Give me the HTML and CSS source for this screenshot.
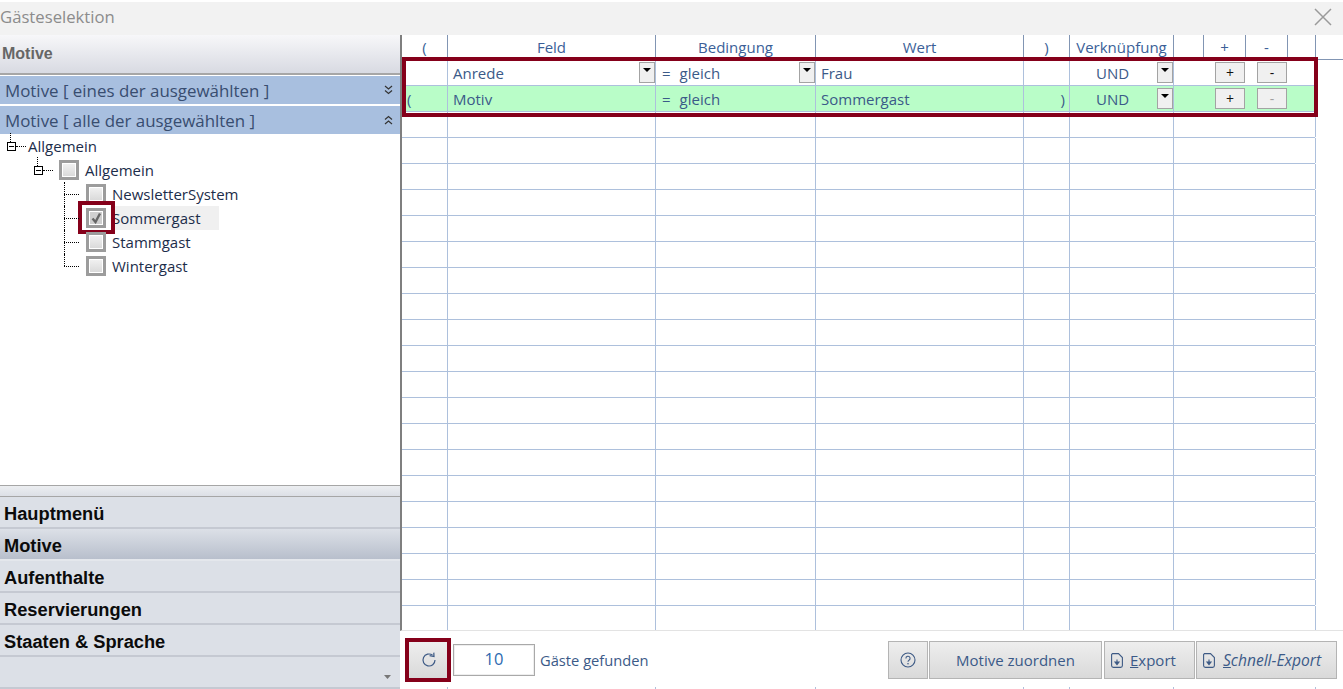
FILE: index.html
```html
<!DOCTYPE html>
<html lang="de">
<head>
<meta charset="utf-8">
<title>Gästeselektion</title>
<link rel="stylesheet" href="styles.css">
</head>
<body>
<div class="app">
  <header class="titlebar">
    <span class="title">Gästeselektion</span>
    <svg class="close" width="18" height="18" viewBox="0 0 18 18"><path d="M1 1L17 17M17 1L1 17" stroke="#9a9a9a" stroke-width="1.5" fill="none"/></svg>
  </header>
  <div class="main">
    <aside class="side">
      <div class="side-head">Motive</div>
      <div class="band band-first"><span>Motive [ eines der ausgewählten ]</span>
        <svg width="9" height="10" viewBox="0 0 9 10"><path d="M1 1L4.5 4L8 1M1 5.5L4.5 8.5L8 5.5" stroke="#333" stroke-width="1.2" fill="none"/></svg>
      </div>
      <div class="band"><span>Motive [ alle der ausgewählten ]</span>
        <svg width="9" height="10" viewBox="0 0 9 10"><path d="M1 4.5L4.5 1.5L8 4.5M1 9L4.5 6L8 9" stroke="#333" stroke-width="1.2" fill="none"/></svg>
      </div>
      <div class="tree">
        <div class="node lvl0"><span class="exp"></span><span class="label">Allgemein</span></div>
        <div class="node lvl1"><span class="exp"></span><span class="cb"></span><span class="label">Allgemein</span></div>
        <div class="node child"><span class="cb"></span><span class="label">NewsletterSystem</span></div>
        <div class="node child sel"><span class="cb cb-on"><svg width="12" height="12" viewBox="0 0 12 12"><path d="M2.5 6.5L5.5 10L10 1.5" stroke="#666" stroke-width="2.4" fill="none"/></svg></span><span class="label">Sommergast</span><span class="mark"></span></div>
        <div class="node child"><span class="cb"></span><span class="label">Stammgast</span></div>
        <div class="node child last"><span class="cb"></span><span class="label">Wintergast</span></div>
      </div>
      <div class="grip"></div>
      <nav class="menu">
        <div class="mi">Hauptmenü</div>
        <div class="mi mi-on">Motive</div>
        <div class="mi">Aufenthalte</div>
        <div class="mi">Reservierungen</div>
        <div class="mi">Staaten &amp; Sprache</div>
        <div class="mi mi-end"><svg width="7" height="4" viewBox="0 0 7 4"><path d="M0 0H7L3.5 4Z" fill="#777"/></svg></div>
      </nav>
    </aside>
    <section class="content">
      <div class="grid">
        <div class="ghead">
          <div>(</div><div>Feld</div><div>Bedingung</div><div>Wert</div><div>)</div><div>Verknüpfung</div><div></div><div>+</div><div>-</div><div></div><div class="open"></div>
        </div>
        <div class="row">
          <div class="c"></div>
          <div class="c"><span class="t1">Anrede</span><span class="dd"></span></div>
          <div class="c"><span class="eq">=</span><span>gleich</span><span class="dd"></span></div>
          <div class="c"><span class="t2">Frau</span></div>
          <div class="c"></div>
          <div class="c c-und"><span class="und">UND</span><span class="dd"></span></div>
          <div class="c c-btn"><span class="pm">+</span><span class="pm">-</span></div>
        </div>
        <div class="row row-g">
          <div class="c"><span class="po">(</span></div>
          <div class="c"><span class="t1">Motiv</span></div>
          <div class="c"><span class="eq">=</span><span>gleich</span></div>
          <div class="c"><span class="t2">Sommergast</span></div>
          <div class="c c-end"><span>)</span></div>
          <div class="c c-und"><span class="und">UND</span><span class="dd"></span></div>
          <div class="c c-btn"><span class="pm">+</span><span class="pm pm-off">-</span></div>
        </div>
        <div class="row"><i></i><i></i><i></i><i></i><i></i><i></i><i></i></div>
        <div class="row"><i></i><i></i><i></i><i></i><i></i><i></i><i></i></div>
        <div class="row"><i></i><i></i><i></i><i></i><i></i><i></i><i></i></div>
        <div class="row"><i></i><i></i><i></i><i></i><i></i><i></i><i></i></div>
        <div class="row"><i></i><i></i><i></i><i></i><i></i><i></i><i></i></div>
        <div class="row"><i></i><i></i><i></i><i></i><i></i><i></i><i></i></div>
        <div class="row"><i></i><i></i><i></i><i></i><i></i><i></i><i></i></div>
        <div class="row"><i></i><i></i><i></i><i></i><i></i><i></i><i></i></div>
        <div class="row"><i></i><i></i><i></i><i></i><i></i><i></i><i></i></div>
        <div class="row"><i></i><i></i><i></i><i></i><i></i><i></i><i></i></div>
        <div class="row"><i></i><i></i><i></i><i></i><i></i><i></i><i></i></div>
        <div class="row"><i></i><i></i><i></i><i></i><i></i><i></i><i></i></div>
        <div class="row"><i></i><i></i><i></i><i></i><i></i><i></i><i></i></div>
        <div class="row"><i></i><i></i><i></i><i></i><i></i><i></i><i></i></div>
        <div class="row"><i></i><i></i><i></i><i></i><i></i><i></i><i></i></div>
        <div class="row"><i></i><i></i><i></i><i></i><i></i><i></i><i></i></div>
        <div class="row"><i></i><i></i><i></i><i></i><i></i><i></i><i></i></div>
        <div class="row"><i></i><i></i><i></i><i></i><i></i><i></i><i></i></div>
        <div class="row"><i></i><i></i><i></i><i></i><i></i><i></i><i></i></div>
        <div class="row"><i></i><i></i><i></i><i></i><i></i><i></i><i></i></div>
        <div class="outline"></div>
      </div>
      <footer class="foot">
        <button class="btn refresh" type="button" aria-label="Aktualisieren">
          <svg width="16" height="16" viewBox="0 0 16 16"><path d="M11.6 3.2A6 6 0 1 0 14 8" stroke="#3d5a85" stroke-width="1.2" fill="none"/><path d="M8.6 3.6L13 4.6L12.8 0.6" stroke="#3d5a85" stroke-width="1.2" fill="none"/></svg>
        </button>
        <span class="count">10</span>
        <span class="found">Gäste gefunden</span>
        <button class="btn b-help" type="button" aria-label="Hilfe">
          <svg width="16" height="16" viewBox="0 0 16 16"><circle cx="8" cy="8" r="7" stroke="#3d5a85" stroke-width="1.1" fill="none"/><path d="M5.9 6.4A2.1 2.1 0 1 1 9 8.2C8.3 8.6 8 9 8 9.8" stroke="#3d5a85" stroke-width="1.1" fill="none"/><circle cx="8" cy="11.8" r="0.8" fill="#3d5a85"/></svg>
        </button>
        <button class="btn b-mot" type="button">Motive zuordnen</button>
        <button class="btn b-exp" type="button">
          <svg width="12" height="15" viewBox="0 0 12 15"><path d="M1.5 .6H7.5L11.4 4.5V12.6A1.8 1.8 0 0 1 9.6 14.4H2.4A1.8 1.8 0 0 1 .6 12.6V1.5Z" stroke="#3d5a85" stroke-width="1.1" fill="none"/><path d="M6 6.5V10.5M4 9H8L6 11.5Z" stroke="#3d5a85" stroke-width="1.1" fill="#3d5a85"/></svg>
          <span><u>E</u>xport</span>
        </button>
        <button class="btn b-qexp" type="button">
          <svg width="12" height="15" viewBox="0 0 12 15"><path d="M1.5 .6H7.5L11.4 4.5V12.6A1.8 1.8 0 0 1 9.6 14.4H2.4A1.8 1.8 0 0 1 .6 12.6V1.5Z" stroke="#3d5a85" stroke-width="1.1" fill="none"/><path d="M6 6.5V10.5M4 9H8L6 11.5Z" stroke="#3d5a85" stroke-width="1.1" fill="#3d5a85"/></svg>
          <em><u>S</u>chnell-Export</em>
        </button>
      </footer>
      <div class="row ticks"><i></i><i></i><i></i><i></i><i></i><i></i><i></i></div>
    </section>
  </div>
</div>
</body>
</html>
```
FILE: styles.css
```css
* { box-sizing: border-box; }
html, body { margin: 0; height: 100%; background: #fff; overflow: hidden; }
body { font-family: "Open Sans", "Liberation Sans", sans-serif; font-size: 15px; color: #3b5a88; }
.app { width: 1343px; height: 689px; padding-top: 2px; display: flex; flex-direction: column; }

.titlebar { height: 33px; flex: none; background: #f2f2f2; display: flex; align-items: center; justify-content: space-between; padding: 0 11px 4px 0; }
.title { font-size: 16.7px; color: #8c8c8c; }

.main { flex: 1; display: flex; min-height: 0; }

.side { width: 400px; flex: none; display: flex; flex-direction: column; height: 654px; }
.side-head { height: 38px; flex: none; padding: 0 2px; display: flex; align-items: center; font: bold 16px "Liberation Sans", sans-serif; color: #666; background: linear-gradient(#f7f7f9, #d8dae2); }
.band { height: 28px; flex: none; margin-top: 2px; background: #a8bfdf; display: flex; align-items: center; justify-content: space-between; padding: 0 7px 0 5px; font-size: 16.9px; color: #384d70; }
.band-first { margin-top: 3px; position: relative; }
.band-first::before { content: ""; position: absolute; left: 0; right: 0; top: -3px; height: 2px; background: #a6a6a6; }

.tree { height: 351px; flex: none; position: relative; color: #1c2d4a; }
.node { height: 24px; display: flex; align-items: center; position: relative; }
.label { position: relative; }
.lvl0 { padding-left: 7px; }
.lvl0 .label { margin-left: 12px; }
.lvl1 { padding-left: 34px; }
.lvl1 .cb { margin-left: 16px; }
.lvl1 .label { margin-left: 6px; }
.exp { width: 9px; height: 9px; flex: none; border: 1px solid #000; position: relative; background: linear-gradient(#000, #000) center / 5px 1px no-repeat #fff; }
.exp::before { content: ""; position: absolute; left: 2px; top: -10px; height: 9px; border-left: 1px dotted #000; }
.exp::after { content: ""; position: absolute; left: 8px; top: 3px; width: 10px; border-top: 1px dotted #000; }
.cb { width: 20px; height: 20px; flex: none; border: 3px solid #9c9c9c; background: linear-gradient(#f2f2f2, #d8d8d8); box-shadow: inset 0 0 0 1px #fff; display: flex; align-items: center; justify-content: center; }
.cb-on { background: #cfcfcf; }
.child { padding-left: 86px; }
.child .label { margin-left: 6px; padding-right: 18px; }
.child::before { content: ""; position: absolute; left: 64px; top: 0; height: 24px; border-left: 1px dotted #000; }
.child::after { content: ""; position: absolute; left: 64px; top: 12px; width: 15px; border-top: 1px dotted #000; }
.child.last::before { height: 12px; }
.sel .label { background: #f0f0f0; align-self: stretch; display: flex; align-items: center; }
.mark { position: absolute; left: 78px; top: -5px; width: 37px; height: 33px; border: 4px solid #85001a; }

.grip { height: 12px; flex: none; border-top: 1px solid #a6a6a6; border-bottom: 1px solid #a6a6a6; background: linear-gradient(#eceef1, #dcdfe6); }
.menu { flex: 1; display: flex; flex-direction: column; border-bottom: 2px solid #c5c9d2; }
.mi { height: 32px; flex: none; padding: 3px 0 0 4px; display: flex; align-items: center; font: bold 18.25px "Liberation Sans", sans-serif; color: #0b0b0b; background: #dce0e7; border-bottom: 2px solid #c5c9d2; }
.mi-on { background: linear-gradient(#dce0e7, #b8bfcc); border-bottom-color: #e4e7ec; }
.mi-end { flex: 1; height: auto; border-bottom: 0; justify-content: flex-end; padding: 10px 9px 0 0; }

.content { flex: 1; min-width: 0; height: 654px; display: flex; flex-direction: column; }
.grid { height: 596px; flex: none; border-left: 2px solid #7f7f7f; position: relative; overflow: hidden; border-bottom: 1px solid #e3e3e3; }
.ghead { height: 25px; display: grid; grid-template-columns: 46px 208px 160px 208px 46px 104px 30px 42px 42px 28px 1fr; border-bottom: 1px solid #8195b3; }
.ghead > div { border-right: 1px solid #8195b3; display: flex; align-items: center; justify-content: center; color: #3b5f98; }
.ghead > .open { border-right: 0; }
.row { height: 26px; width: 913px; display: grid; grid-template-columns: 46px 208px 160px 208px 46px 104px 142px; border-bottom: 1px solid #adc0dc; }
.row > i, .c { border-right: 1px solid #adc0dc; display: flex; align-items: center; min-width: 0; }
.row-g { background: #b9fdc8; }
.t1 { padding-left: 5px; }
.t2 { padding-left: 5px; }
.eq { padding: 0 9px 0 6px; }
.po { padding-left: 5px; }
.c-end { justify-content: flex-end; padding-right: 4px; }
.c-und { padding-left: 26px; }
.und { width: 61px; }
.dd { margin-left: auto; width: 16px; height: 21px; flex: none; border: 1px solid #a3a3a3; background: #f0f0f0; position: relative; }
.dd::after { content: ""; position: absolute; left: 3px; top: 5px; border: 4px solid transparent; border-top: 4px solid #000; border-bottom: 0; }
.c-btn { padding-left: 41px; gap: 12px; }
.pm { width: 30px; height: 21px; border: 1px solid #a3a3a3; background: #f0f0f0; color: #111; display: flex; align-items: center; justify-content: center; font-size: 14px; }
.pm-off { color: #a0a0a0; }
.outline { position: absolute; left: 0; top: 22px; width: 916px; height: 60px; border: 4px solid #85001a; }

.foot { height: 56px; flex: none; display: flex; align-items: center; padding: 2px 0 0 9px; background: #fff; }
.btn { font: inherit; color: #3b5a88; height: 38px; border: 1px solid #b4b4b4; background: linear-gradient(#eeeeee, #d9d9d9); display: flex; align-items: center; justify-content: center; padding: 0; }
.refresh { width: 38px; height: 36px; outline: 4px solid #85001a; border: 0; padding-left: 2px; }
.count { width: 82px; height: 32px; margin-left: 6px; padding-bottom: 3px; border: 1px solid #a9a9a9; box-shadow: inset 0 0 0 1px #eee; display: flex; align-items: center; justify-content: center; color: #2d6ab0; font-size: 16.5px; }
.found { margin-left: 5px; flex: 1; font-size: 14.7px; }
.b-help { width: 40px; }
.b-mot { width: 173px; margin-left: 1px; }
.b-exp { width: 91px; margin-left: 2px; gap: 7px; justify-content: flex-start; padding-left: 6px; }
.b-qexp { width: 141px; margin: 0 6px 0 1px; gap: 8px; justify-content: flex-start; padding-left: 6px; }
.b-qexp em { font-size: 15.6px; }
.ticks { height: 2px; border: 0; margin-left: 2px; }
```
